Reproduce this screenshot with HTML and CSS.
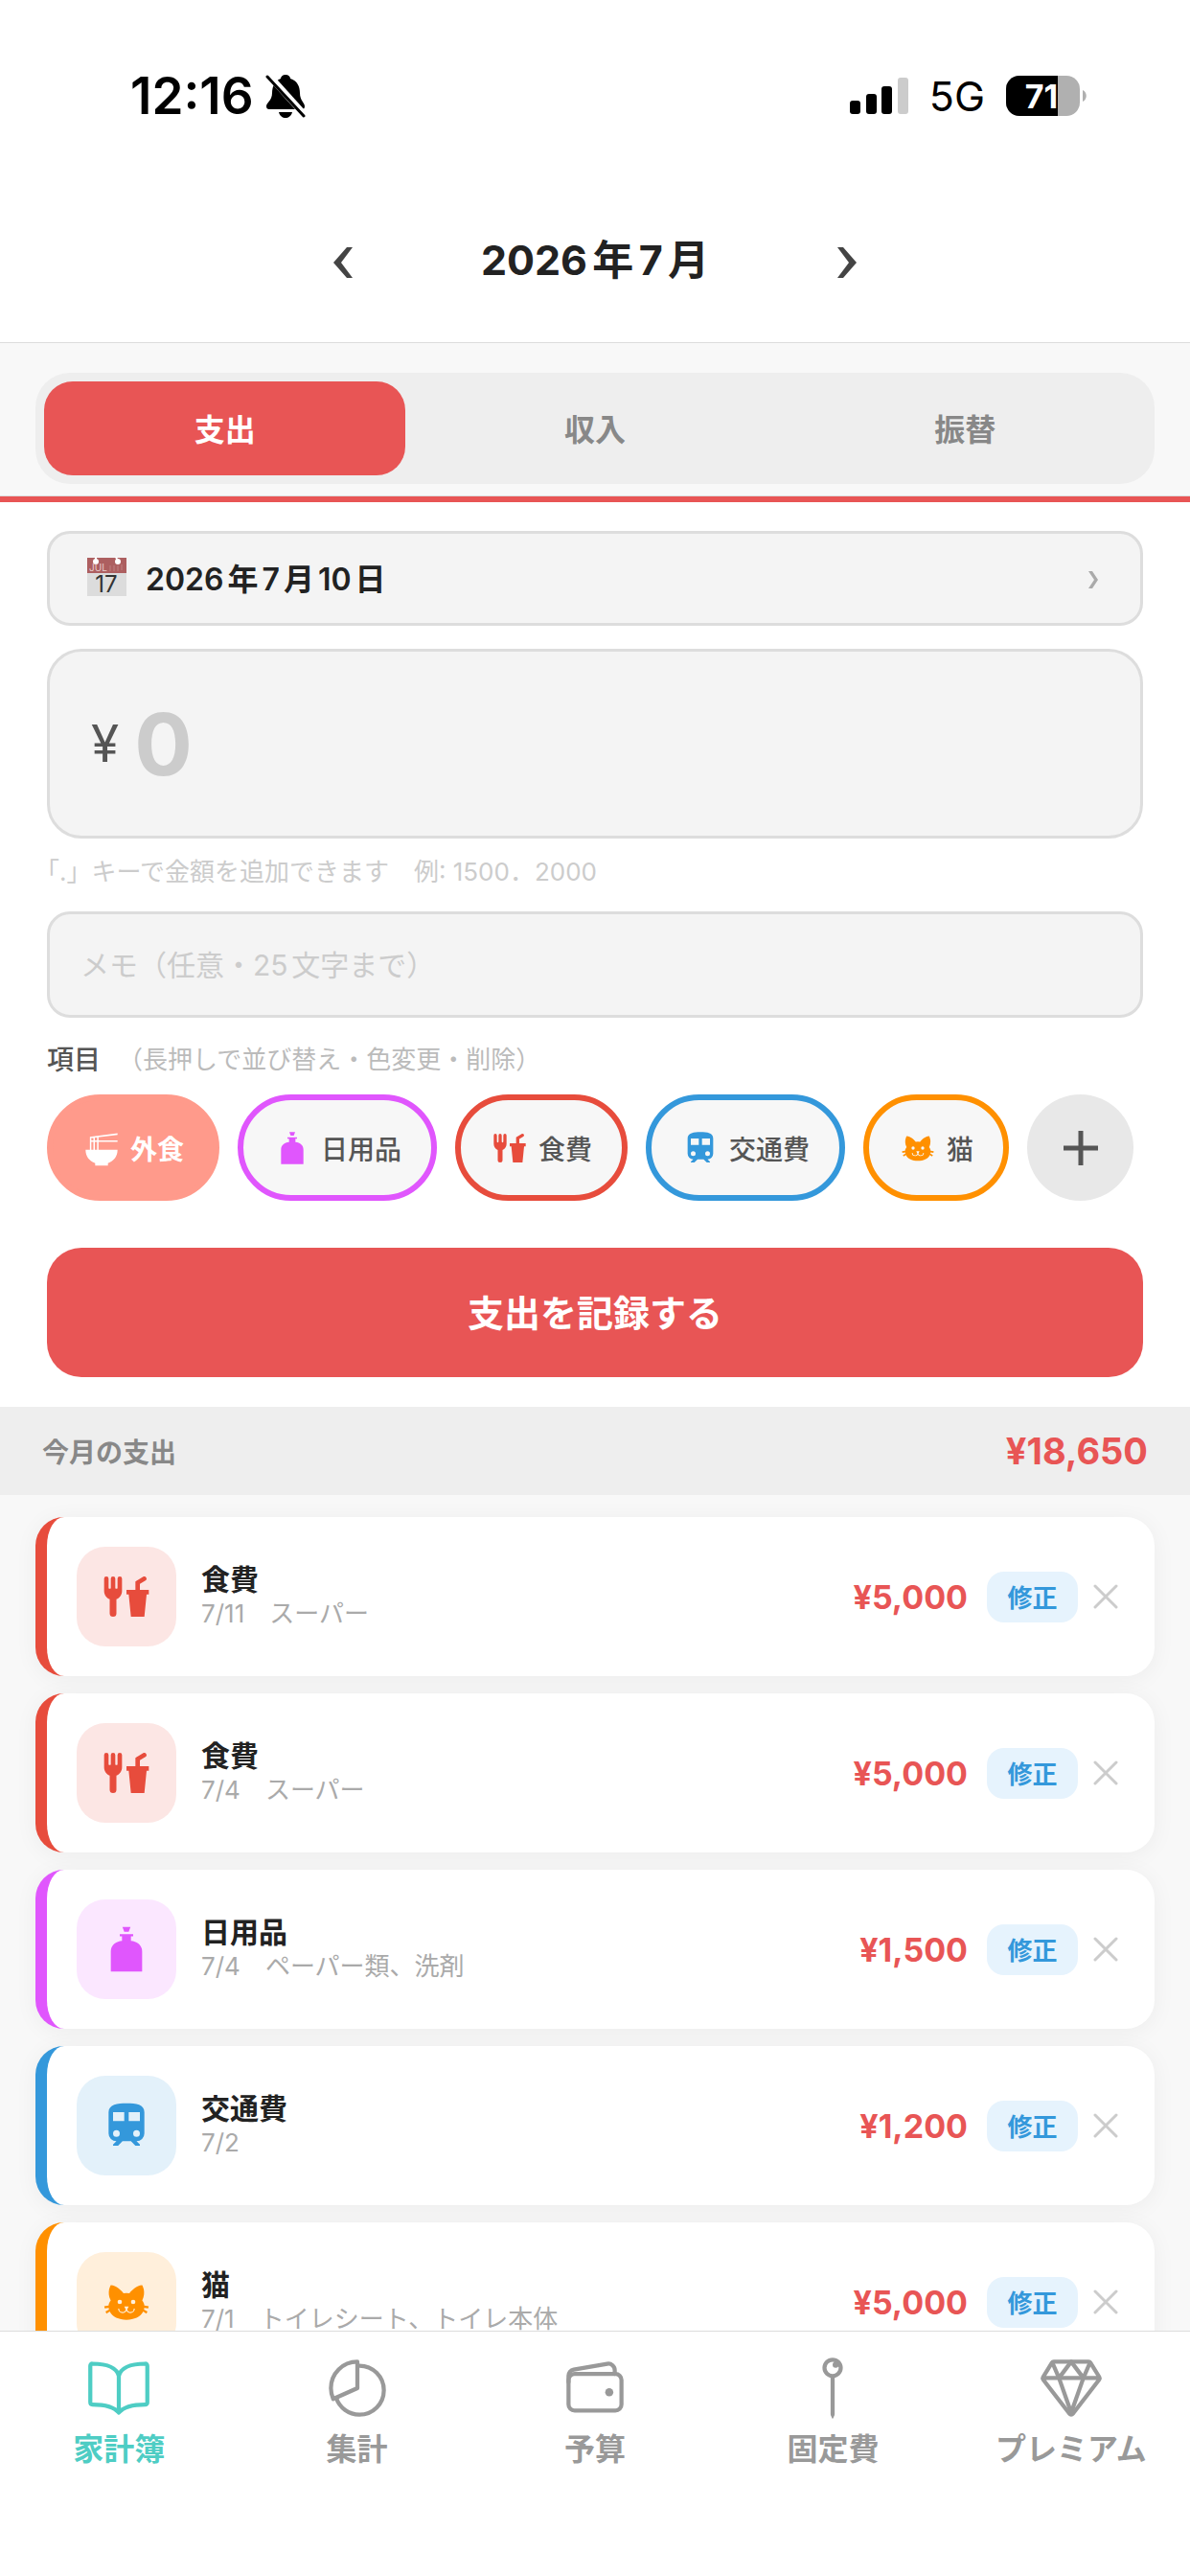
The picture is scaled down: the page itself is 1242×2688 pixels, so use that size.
FILE: index.html
```html
<!DOCTYPE html>
<html lang="ja">
<head>
    <meta charset="UTF-8">
    <meta name="viewport" content="width=device-width, initial-scale=1.0">
    <title>家計簿</title>
    <link rel="stylesheet" href="styles.css">
</head>
<body>
    <!-- Shared icons -->
    <svg class="sprite" aria-hidden="true">
        <symbol id="noodles" viewBox="0 0 24 24">
            <path d="M2 13h20c0 4-2.200 7-6 8.500V23H8v-1.500C4.200 20 2 17 2 13zM4.700 5L22 2.700v1L4.700 5.800zM4.700 7.200H22v.9H4.700zM4.700 5h.9v8h-.9zM6.900 5h.9v8h-.9zM9.200 4.700h.9V13h-.9z"/>
        </symbol>
        <symbol id="bottle" viewBox="0 0 24 24">
            <path d="M10.200 2h3.600L13 4.200h-2zM9 5.200h6v1h-1v2c3 .3 5 2 5 4.800v9H5v-9c0-2.800 2-4.500 5-4.800v-2H9z"/>
        </symbol>
        <symbol id="food" viewBox="0 0 24 24">
            <path d="M3,3A1,1 0 0,0 2,4V8L2,9.500C2,11.190 3.030,12.630 4.500,13.220V19.500A1.500,1.500 0 0,0 6,21A1.500,1.500 0 0,0 7.500,19.500V13.220C8.970,12.630 10,11.190 10,9.500V8L10,4A1,1 0 0,0 9,3A1,1 0 0,0 8,4V8A0.500,0.500 0 0,1 7.500,8.500A0.500,0.500 0 0,1 7,8V4A1,1 0 0,0 6,3A1,1 0 0,0 5,4V8A0.500,0.500 0 0,1 4.500,8.500A0.500,0.500 0 0,1 4,8V4A1,1 0 0,0 3,3M19.880,3C19.750,3 19.620,3.090 19.500,3.160L16,5.250V9H12V11H13L14,21H20L21,11H22V9H18V6.340L20.500,4.840C21,4.560 21.130,4 20.840,3.500C20.630,3.140 20.260,2.950 19.880,3Z"/>
        </symbol>
        <symbol id="train" viewBox="0 0 24 24">
            <path d="M12,2C8,2 4,2.500 4,6V15.500A3.500,3.500 0 0,0 7.500,19L6,20.500V21H8.230L10.230,19H14L16,21H18V20.500L16.500,19A3.500,3.500 0 0,0 20,15.500V6C20,2.500 16.420,2 12,2M7.500,17A1.500,1.500 0 0,1 6,15.500A1.500,1.500 0 0,1 7.500,14A1.500,1.500 0 0,1 9,15.500A1.500,1.500 0 0,1 7.500,17M11,10H6V6H11V10M13,10V6H18V10H13M16.500,17A1.500,1.500 0 0,1 15,15.500A1.500,1.500 0 0,1 16.500,14A1.500,1.500 0 0,1 18,15.500A1.500,1.500 0 0,1 16.500,17Z"/>
        </symbol>
        <symbol id="cat" viewBox="0 0 24 24">
            <path d="M12,8L10.670,8.090C9.810,7.070 7.400,4.500 5,4.500C5,4.500 3.030,7.460 4.960,11.410C4.410,12.240 4.070,12.670 4,13.660L2.070,13.950L2.280,14.930L4.040,14.670L4.180,15.380L2.610,16.320L3.080,17.210L4.530,16.320C5.680,18.760 8.590,20 12,20C15.410,20 18.320,18.760 19.470,16.320L20.920,17.210L21.390,16.320L19.820,15.380L19.960,14.670L21.720,14.930L21.930,13.950L20,13.660C19.930,12.670 19.590,12.240 19.040,11.410C20.970,7.460 19,4.500 19,4.500C16.600,4.500 14.190,7.070 13.330,8.090L12,8M9,11A1,1 0 0,1 10,12A1,1 0 0,1 9,13A1,1 0 0,1 8,12A1,1 0 0,1 9,11M15,11A1,1 0 0,1 16,12A1,1 0 0,1 15,13A1,1 0 0,1 14,12A1,1 0 0,1 15,11M11,14H13L12.300,15.390C12.500,16.030 13.060,16.500 13.750,16.500A1.500,1.500 0 0,0 15.250,15H15.750A2,2 0 0,1 13.750,17C13,17 12.350,16.590 12,16V16H12C11.650,16.590 11,17 10.250,17A2,2 0 0,1 8.250,15H8.750A1.500,1.500 0 0,0 10.250,16.500C10.940,16.500 11.500,16.030 11.700,15.390L11,14Z"/>
        </symbol>
        <symbol id="close" viewBox="0 0 26 26">
            <path d="M2 2l22 22M24 2L2 24" fill="none" stroke="currentColor" stroke-width="3" stroke-linecap="round"/>
        </symbol>
    </svg>

    <div class="app">
        <header class="header">
            <div class="status">
                <div class="status-left">
                    <span class="time">12:16</span>
                    <svg class="bell" viewBox="0 0 42 46" aria-hidden="true">
                        <path d="M21 1c3 0 5 2 5 4 7 2 10 8 10 15 0 8 5 10 5 14 0 2-1 3-3 3H4c-2 0-3-1-3-3 0-4 6-6 6-14C7 13 10 7 16 5c0-2 2-4 5-4zM14 40h14c-1 4-4 6-7 6s-6-2-7-6z"/>
                        <path d="M3 1l38 42" stroke="#fff" stroke-width="7"/>
                        <path d="M2 3l38 41" stroke="#000" stroke-width="3" stroke-linecap="round"/>
                    </svg>
                </div>
                <div class="status-right">
                    <svg class="signal" viewBox="0 0 61 38" aria-hidden="true">
                        <rect x="0" y="24" width="11" height="14" rx="3"/>
                        <rect x="17" y="17" width="11" height="21" rx="3"/>
                        <rect x="33" y="9" width="11" height="29" rx="3"/>
                        <rect x="50" y="0" width="11" height="38" rx="3" fill="#ccc"/>
                    </svg>
                    <span class="network">5G</span>
                    <svg class="battery" viewBox="0 0 84 42" role="img" aria-label="71%">
                        <rect width="77" height="42" rx="14" fill="#b0b0b0"/>
                        <path d="M14 0h40v42H14A14 14 0 0 1 0 28V14A14 14 0 0 1 14 0z"/>
                        <path d="M80 15c5 2 5 10 0 12z" fill="#b0b0b0"/>
                        <text x="37" y="34" text-anchor="middle">71</text>
                    </svg>
                </div>
            </div>
            <div class="month-nav">
                <button type="button" class="month-btn" aria-label="前の月">
                    <svg viewBox="0 0 24 46"><path d="M22 14h-6L2 30l14 16h6L10 30z"/></svg>
                </button>
                <h1>2026年7月</h1>
                <button type="button" class="month-btn" aria-label="次の月">
                    <svg viewBox="0 0 24 46"><path d="M2 14h6l14 16L8 46H2l12-16z"/></svg>
                </button>
            </div>
        </header>

        <div class="type-bar">
            <div class="type-tabs">
                <button type="button" class="type-tab active">支出</button>
                <button type="button" class="type-tab">収入</button>
                <button type="button" class="type-tab">振替</button>
            </div>
        </div>

        <form class="entry">
            <button type="button" class="field date">
                <svg class="calendar" viewBox="0 0 42 42" aria-hidden="true">
                    <rect y="1" width="41" height="40" fill="#dcdcdc"/>
                    <rect y="1" width="41" height="16" fill="#ad5f60"/>
                    <circle cx="9" cy="5" r="3" fill="#fff"/>
                    <circle cx="32" cy="5" r="3" fill="#fff"/>
                    <path d="M9 0v5M30 0l2 5" stroke="#fff" stroke-width="2"/>
                    <path d="M24 9v6M28 9v6M32 9v6M36 8v6" stroke="#bf8080" stroke-width="1"/>
                    <text class="cal-month" x="2" y="15">JUL</text>
                    <text class="cal-day" x="20" y="37" text-anchor="middle">17</text>
                </svg>
                <span class="date-text">2026年7月10日</span>
                <svg class="arrow" viewBox="0 0 12 24" aria-hidden="true"><path d="M1 6h4l6 9-6 9H1l6-9z"/></svg>
            </button>

            <div class="field amount">
                <label for="amount">¥</label>
                <input type="text" id="amount" inputmode="decimal" placeholder="0">
            </div>
            <p class="hint">「.」キーで金額を追加できます　例: 1500．2000</p>

            <input type="text" class="field memo" maxlength="25" aria-label="メモ" placeholder="メモ（任意・25文字まで）">

            <div class="category-label">
                <span>項目</span>
                <small>（長押しで並び替え・色変更・削除）</small>
            </div>
            <div class="chips">
                <button type="button" class="chip coral selected"><svg><use href="#noodles"/></svg>外食</button>
                <button type="button" class="chip purple"><svg><use href="#bottle"/></svg>日用品</button>
                <button type="button" class="chip red"><svg><use href="#food"/></svg>食費</button>
                <button type="button" class="chip blue"><svg><use href="#train"/></svg>交通費</button>
                <button type="button" class="chip orange"><svg><use href="#cat"/></svg>猫</button>
                <button type="button" class="chip-add" aria-label="項目を追加">
                    <svg viewBox="0 0 38 38"><path d="M19 1v36M1 19h36"/></svg>
                </button>
            </div>

            <button type="button" class="submit">支出を記録する</button>
        </form>

        <div class="summary">
            <span>今月の支出</span>
            <strong>¥18,650</strong>
        </div>

        <main class="list">
            <div class="item red">
                <div class="item-icon"><svg><use href="#food"/></svg></div>
                <div class="item-info">
                    <div class="item-name">食費</div>
                    <div class="item-note">7/11　スーパー</div>
                </div>
                <div class="item-amount">¥5,000</div>
                <button type="button" class="edit">修正</button>
                <button type="button" class="delete" aria-label="削除"><svg><use href="#close"/></svg></button>
            </div>
            <div class="item red">
                <div class="item-icon"><svg><use href="#food"/></svg></div>
                <div class="item-info">
                    <div class="item-name">食費</div>
                    <div class="item-note">7/4　スーパー</div>
                </div>
                <div class="item-amount">¥5,000</div>
                <button type="button" class="edit">修正</button>
                <button type="button" class="delete" aria-label="削除"><svg><use href="#close"/></svg></button>
            </div>
            <div class="item purple">
                <div class="item-icon"><svg><use href="#bottle"/></svg></div>
                <div class="item-info">
                    <div class="item-name">日用品</div>
                    <div class="item-note">7/4　ペーパー類、洗剤</div>
                </div>
                <div class="item-amount">¥1,500</div>
                <button type="button" class="edit">修正</button>
                <button type="button" class="delete" aria-label="削除"><svg><use href="#close"/></svg></button>
            </div>
            <div class="item blue">
                <div class="item-icon"><svg><use href="#train"/></svg></div>
                <div class="item-info">
                    <div class="item-name">交通費</div>
                    <div class="item-note">7/2</div>
                </div>
                <div class="item-amount">¥1,200</div>
                <button type="button" class="edit">修正</button>
                <button type="button" class="delete" aria-label="削除"><svg><use href="#close"/></svg></button>
            </div>
            <div class="item orange">
                <div class="item-icon"><svg><use href="#cat"/></svg></div>
                <div class="item-info">
                    <div class="item-name">猫</div>
                    <div class="item-note">7/1　トイレシート、トイレ本体</div>
                </div>
                <div class="item-amount">¥5,000</div>
                <button type="button" class="edit">修正</button>
                <button type="button" class="delete" aria-label="削除"><svg><use href="#close"/></svg></button>
            </div>
        </main>

        <nav class="tabbar">
            <a href="#" class="active">
                <svg viewBox="0 0 512 512">
                    <path d="M256 160c16-63.160 76.430-95.410 208-96a15.940 15.940 0 0116 16v288a16 16 0 01-16 16c-128 0-177.450 25.810-208 64-30.370-38-80-64-208-64-9.880 0-16-8.050-16-17.930V80a15.940 15.940 0 0116-16c131.570.590 192 32.840 208 96zM256 160v288"/>
                </svg>
                家計簿
            </a>
            <a href="#">
                <svg viewBox="0 0 512 512">
                    <path d="M256.050 80.650Q263.940 80 272 80c106 0 192 86 192 192s-86 192-192 192A192.090 192.090 0 0189.120 330.650"/>
                    <path d="M256 48C141.120 48 48 141.120 48 256a207.290 207.290 0 0018.090 85L256 256z"/>
                </svg>
                集計
            </a>
            <a href="#">
                <svg viewBox="0 0 512 512">
                    <rect x="48" y="144" width="416" height="288" rx="48"/>
                    <path d="M411.360 144v-30A50 50 0 00352 64.900L88.640 109.850A50 50 0 0048 159v49"/>
                    <circle class="solid" cx="368" cy="288" r="32"/>
                </svg>
                予算
            </a>
            <a href="#">
                <svg viewBox="0 0 512 512">
                    <circle cx="256" cy="96" r="64"/>
                    <circle class="solid" cx="280" cy="72" r="24"/>
                    <path class="solid" d="M272 164a9 9 0 00-9-9h-14a9 9 0 00-9 9v293.560a32.090 32.090 0 002.490 12.380l10.070 24a3.920 3.920 0 006.880 0l10.070-24a32.090 32.090 0 002.490-12.380z"/>
                </svg>
                固定費
            </a>
            <a href="#">
                <svg viewBox="0 0 512 512">
                    <path d="M35.420 188.210l207.750 269.460a16.170 16.170 0 0025.660 0l207.750-269.460a16.520 16.520 0 00.950-18.750L407.060 55.710A16.220 16.220 0 00393.270 48H118.730a16.220 16.220 0 00-13.790 7.710L34.470 169.460a16.520 16.520 0 00.950 18.750zM48 176h416"/>
                    <path d="M400 64l-48 112-96-128M112 64l48 112 96-128M256 448l-96-272M256 448l96-272"/>
                </svg>
                プレミアム
            </a>
        </nav>
    </div>
</body>
</html>
```
FILE: styles.css
```css
* {
    margin: 0;
    padding: 0;
    box-sizing: border-box;
    font-family: Inter, "Noto Sans CJK JP", sans-serif;
}

body {
    background: #f8f8f8;
    color: #222;
    text-autospace: normal;
}

button,
input {
    border: none;
    background: none;
    color: inherit;
    text-autospace: inherit;
}

button {
    cursor: pointer;
}

input:focus {
    outline: none;
}

.sprite {
    display: none;
}

.app {
    height: 100vh;
    display: flex;
    flex-direction: column;
}

.app > * {
    flex-shrink: 0;
}

/* Category colours */
.coral {
    --accent: #ff9a8b;
}

.purple {
    --accent: #e056fd;
}

.red {
    --accent: #e74c3c;
}

.blue {
    --accent: #3498db;
}

.orange {
    --accent: #ff9000;
}

/* Header */
.header {
    background: white;
    border-bottom: 1px solid #ddd;
    padding-bottom: 21px;
}

.status {
    height: 200px;
    padding: 0 108px 0 136px;
    display: flex;
    justify-content: space-between;
    align-items: center;
    color: black;
}

.status-left,
.status-right {
    display: flex;
    align-items: center;
}

.status-left {
    gap: 12px;
}

.status-right {
    gap: 22px;
}

.time {
    font-size: 53px;
    font-weight: 600;
}

.bell {
    width: 42px;
    height: 46px;
}

.signal {
    width: 61px;
    height: 38px;
}

.network {
    font-size: 43px;
}

.battery {
    width: 84px;
    height: 42px;
}

.battery text {
    font-size: 34px;
    font-weight: 700;
    fill: white;
}

.month-nav {
    height: 136px;
    display: flex;
    justify-content: center;
    align-items: center;
    gap: 50px;
}

.month-nav h1 {
    min-width: 366px;
    text-align: center;
    font-size: 43px;
    font-weight: 700;
}

.month-btn {
    width: 60px;
    height: 80px;
}

.month-btn svg {
    width: 24px;
    height: 46px;
    fill: #444;
}

/* Expense / income / transfer */
.type-bar {
    padding: 31px 37px 12px;
    border-bottom: 1px solid #ddd;
}

.type-tabs {
    display: flex;
    gap: 9px;
    padding: 9px;
    background: #eee;
    border-radius: 36px;
}

.type-tab {
    flex: 1;
    height: 98px;
    padding-bottom: 3px;
    border-radius: 30px;
    font-size: 32px;
    font-weight: 700;
    color: #888;
}

.type-tab.active {
    background: #e85555;
    color: white;
}

/* Entry form */
.entry {
    background: white;
    border-top: 6px solid #e85555;
    padding: 30px 49px 31px;
    display: flex;
    flex-direction: column;
}

.field {
    background: #f4f4f4;
    border: 3px solid #ddd;
    border-radius: 24px;
}

.date {
    height: 99px;
    padding: 0 43px 3px 39px;
    margin-bottom: 24px;
    display: flex;
    align-items: center;
    gap: 19px;
}

.calendar {
    width: 42px;
    height: 42px;
}

.cal-month {
    font-size: 10px;
    fill: #e8cccc;
}

.cal-day {
    font-size: 24px;
    fill: #333;
}

.date-text {
    flex: 1;
    text-align: left;
    font-size: 32px;
    font-weight: 600;
}

.arrow {
    width: 12px;
    height: 24px;
    fill: #aaa;
}

.amount {
    height: 198px;
    padding: 0 43px;
    border-radius: 36px;
    display: flex;
    align-items: center;
    gap: 16px;
}

.amount label {
    font-size: 53px;
    font-weight: 400;
    color: #555;
}

.amount input {
    flex: 1;
    min-width: 0;
    font-size: 90px;
    font-weight: 700;
}

.amount input::placeholder,
.memo::placeholder {
    color: #ccc;
}

.hint {
    margin: 16px 0 22px;
    font-size: 26px;
    line-height: 38px;
    color: #ccc;
    text-spacing-trim: trim-start;
}

.memo {
    width: 100%;
    height: 111px;
    padding: 0 32px;
    font-size: 30px;
}

.category-label {
    margin: 24px 0 16px;
    display: flex;
    align-items: center;
    gap: 18px;
    line-height: 40px;
    font-size: 28px;
    font-weight: 500;
    color: #555;
}

.category-label small {
    font-size: 26px;
    font-weight: 400;
    color: #bbb;
}

.chips {
    display: flex;
    gap: 19px;
    margin-bottom: 49px;
}

.chip {
    height: 111px;
    padding: 0 31px;
    display: flex;
    align-items: center;
    gap: 10px;
    background: #f7f7f7;
    border: 6px solid var(--accent);
    border-radius: 56px;
    font-size: 28px;
    font-weight: 500;
    color: #555;
    white-space: nowrap;
}

.chip svg {
    width: 40px;
    height: 40px;
    fill: var(--accent);
}

.chip.selected {
    background: var(--accent);
    color: white;
    font-weight: 700;
}

.chip.selected svg {
    fill: white;
}

.chip-add {
    width: 111px;
    height: 111px;
    display: flex;
    align-items: center;
    justify-content: center;
    border-radius: 50%;
    background: #e8e8e8;
}

.chip-add svg {
    width: 38px;
    height: 38px;
    stroke: #555;
    stroke-width: 5;
}

.submit {
    height: 135px;
    padding-bottom: 5px;
    border-radius: 36px;
    background: #e85555;
    color: white;
    font-size: 38px;
    font-weight: 700;
}

/* Monthly total */
.summary {
    height: 92px;
    padding: 0 44px;
    display: flex;
    justify-content: space-between;
    align-items: center;
    background: #eee;
    font-size: 28px;
    font-weight: 700;
    color: #888;
}

.summary strong {
    font-size: 38px;
    font-weight: 700;
    color: #e85555;
}

/* Records */
.list {
    flex: 1 1 0;
    min-height: 0;
    overflow: hidden;
    padding: 23px 37px;
}

.item {
    display: flex;
    align-items: center;
    margin-bottom: 18px;
    padding: 31px 38px 31px 31px;
    background: white;
    border-left: 12px solid var(--accent);
    border-radius: 30px;
    box-shadow: 0 3px 24px rgba(0, 0, 0, 0.05);
}

.item-icon {
    width: 104px;
    height: 104px;
    display: flex;
    align-items: center;
    justify-content: center;
    border-radius: 30px;
    background: color-mix(in srgb, var(--accent) 14%, white);
}

.item-icon svg {
    width: 56px;
    height: 56px;
    fill: var(--accent);
}

.item-info {
    flex: 1;
    min-width: 0;
    margin-left: 26px;
    line-height: 36px;
}

.item-name {
    font-size: 30px;
    font-weight: 700;
}

.item-note {
    font-size: 26px;
    color: #aaa;
}

.item-amount {
    font-size: 34px;
    font-weight: 700;
    color: #e85555;
}

.edit {
    width: 95px;
    height: 53px;
    margin: 0 16px 0 20px;
    padding-bottom: 2px;
    border-radius: 18px;
    background: #e6f3fd;
    color: #3498db;
    font-size: 26px;
    font-weight: 700;
}

.delete {
    height: 26px;
    color: #ccc;
}

.delete svg {
    display: block;
    width: 26px;
    height: 26px;
}

/* Bottom navigation */
.tabbar {
    display: grid;
    grid-template-columns: repeat(5, 1fr);
    padding: 25px 0 112px;
    background: white;
    border-top: 1px solid #ddd;
}

.tabbar a {
    display: flex;
    flex-direction: column;
    align-items: center;
    gap: 10px;
    font-size: 32px;
    font-weight: 700;
    line-height: 40px;
    color: #999;
    text-decoration: none;
    white-space: nowrap;
}

.tabbar a.active {
    color: #4ecdc4;
}

.tabbar svg {
    width: 68px;
    height: 68px;
    fill: none;
    stroke: currentColor;
    stroke-width: 32;
    stroke-linejoin: round;
    stroke-linecap: round;
}

.tabbar .solid {
    fill: currentColor;
    stroke: none;
}
```
